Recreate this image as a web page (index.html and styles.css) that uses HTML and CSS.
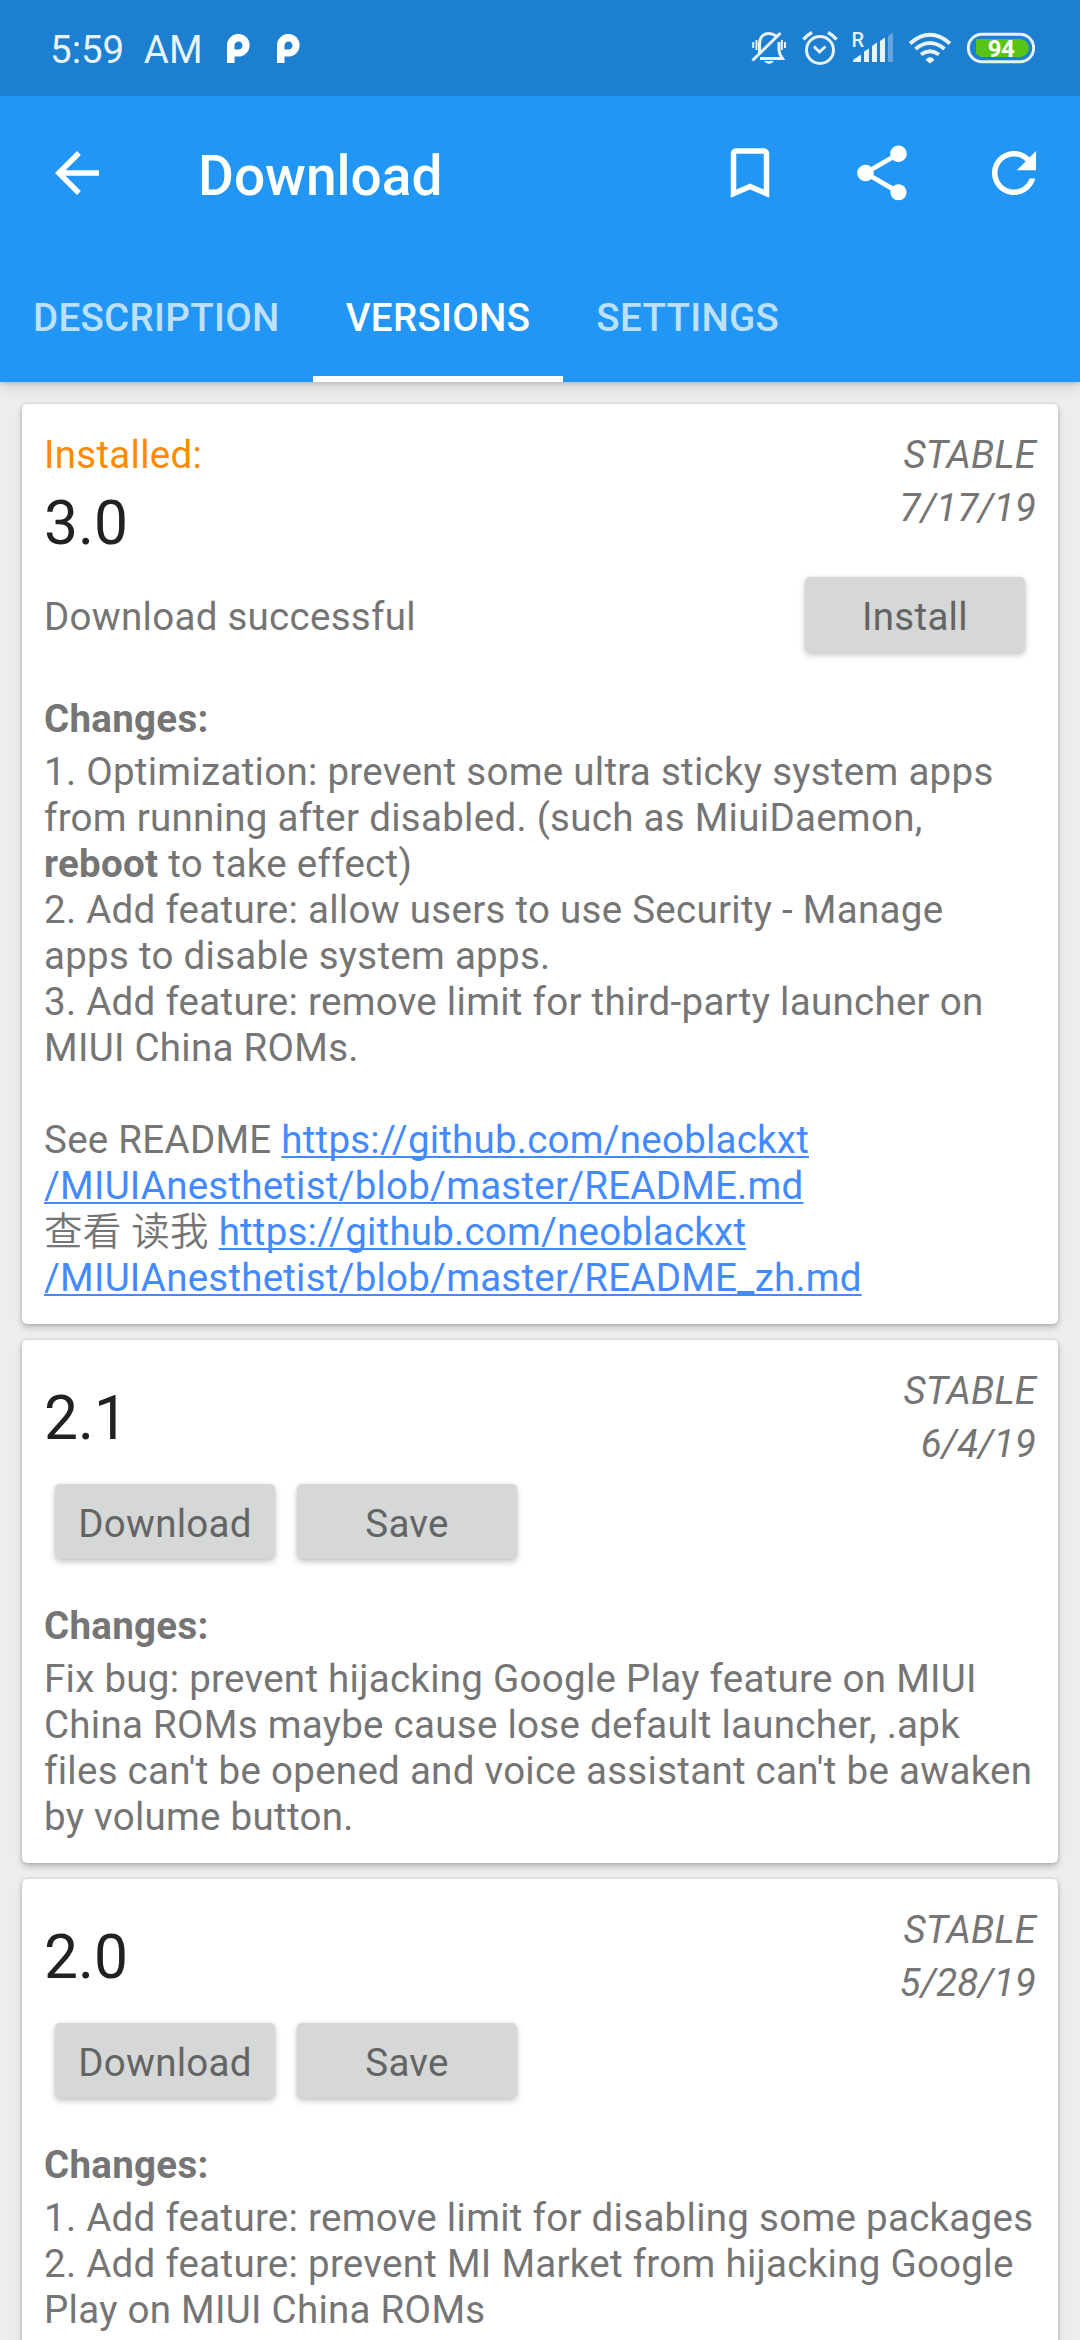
FILE: index.html
```html
<!DOCTYPE html>
<html lang="en">
<head>
<meta charset="utf-8">
<title>Download</title>
<link rel="stylesheet" href="styles.css">
</head>
<body>
<header class="header">
  <div class="status">
    <span class="time">5:59 AM</span>
    <svg class="notice" width="24" height="30" viewBox="0 0 24 30"><path fill="#fff" fill-rule="evenodd" d="M1 29V11.500A11.300 11.300 0 1 1 12.300 22.500H8.500V29ZM8.500 15.500H12.300A4 4 0 1 0 8.500 11.500Z"/></svg>
    <svg class="notice second" width="24" height="30" viewBox="0 0 24 30"><path fill="#fff" fill-rule="evenodd" d="M1 29V11.500A11.300 11.300 0 1 1 12.300 22.500H8.500V29ZM8.500 15.500H12.300A4 4 0 1 0 8.500 11.500Z"/></svg>
    <svg class="system" width="290" height="40" viewBox="745 28 290 40" fill="none" stroke="#e8f2fb" stroke-width="3">
      <path d="M759.500 53V44.500C759.500 37 763.500 33.500 769 33.500C772 33.500 774 34.500 776 36M779 42V50C779 54 781 56 782.500 58.500H760"/>
      <path d="M752.500 60.500L780.500 33"/>
      <path d="M753.200 42V48M756.500 40V50M781.900 40V50M785 42V48" stroke-width="2"/>
      <path d="M764 61H774Q772 64 769 64T764 61Z" fill="#e8f2fb" stroke="none"/>
      <circle cx="820" cy="50" r="13.500"/>
      <path d="M814 46.500L819.500 52L825.500 46.500"/>
      <path d="M803.500 39.500Q807 35 812 32.500M836.500 39.500Q833 35 828 32.500" stroke-width="3.600"/>
      <text class="roaming" x="851.500" y="46.500">R</text>
      <path d="M853 62V60L861 54.500V62ZM864 62V51.500L869 48.500V62ZM872 62V46L877 42.500V62ZM880 62V41L885 37.500V62Z" fill="#e8f2fb" stroke="none"/>
      <path d="M888 62V36L893 32.500V62Z" fill="#e8f2fb" opacity=".35" stroke="none"/>
      <path d="M910 43.500Q930 26 950 43.500M915.500 49Q930 37 944.500 49M921 54.500Q930 48 939 54.500" stroke-width="3.800"/>
      <path d="M925.500 60Q930 54 934.500 60L930 63.500Z" fill="#e8f2fb" stroke="none"/>
      <rect x="968.300" y="34.300" width="65.400" height="27.400" rx="13.700"/>
      <path d="M976 39H1020A9 9 0 0 1 1020 57H981L976 54Z" fill="#58c516" stroke="none"/>
      <text class="percent" x="1001" y="56.500" text-anchor="middle">94</text>
    </svg>
  </div>
  <div class="toolbar">
    <svg class="back" width="66" height="66" viewBox="0 0 24 24"><path d="M20 11H7.830l5.590-5.590L12 4l-8 8 8 8 1.410-1.410L7.830 13H20v-2z"/></svg>
    <h1 class="title">Download</h1>
    <svg width="66" height="66" viewBox="0 0 24 24"><path d="M17 3H7c-1.100 0-1.990.9-1.990 2L5 21l7-3 7 3V5c0-1.100-.9-2-2-2zm0 15l-5-2.180L7 18V5h10v13z"/></svg>
    <svg width="66" height="66" viewBox="0 0 24 24"><path d="M18 16.080c-.76 0-1.440.3-1.960.77L8.910 12.700c.05-.23.090-.46.090-.7s-.040-.47-.090-.7l7.050-4.110c.54.5 1.250.81 2.040.81 1.660 0 3-1.340 3-3s-1.340-3-3-3-3 1.340-3 3c0 .24.040.47.090.7L8.040 9.810C7.500 9.310 6.790 9 6 9c-1.660 0-3 1.340-3 3s1.340 3 3 3c.79 0 1.500-.31 2.040-.81l7.120 4.160c-.05.21-.08.43-.08.65 0 1.610 1.310 2.920 2.920 2.920s2.920-1.310 2.920-2.920-1.310-2.920-2.920-2.920z"/></svg>
    <svg width="66" height="66" viewBox="0 0 24 24"><path d="M17.650 6.350C16.200 4.900 14.210 4 12 4c-4.420 0-7.990 3.580-7.990 8s3.570 8 7.990 8c3.730 0 6.840-2.550 7.730-6h-2.080c-.82 2.330-3.040 4-5.650 4-3.310 0-6-2.690-6-6s2.690-6 6-6c1.660 0 3.140.69 4.220 1.780L13 11h7V4l-2.350 2.350z"/></svg>
  </div>
  <nav class="tabs">
    <a class="tab">DESCRIPTION</a>
    <a class="tab active">VERSIONS</a>
    <a class="tab">SETTINGS</a>
  </nav>
</header>
<main class="versions">
  <article class="card">
    <div class="summary">
      <div>
        <p class="installed">Installed:</p>
        <h2 class="number current">3.0</h2>
      </div>
      <div class="release"><p>STABLE</p><p>7/17/19</p></div>
    </div>
    <div class="actions done"><span class="message">Download successful</span><button class="button">Install</button></div>
    <h3 class="heading">Changes:</h3>
    <p class="changes">1. Optimization: prevent some ultra sticky system apps<br>from running after disabled. (such as MiuiDaemon,<br><b>reboot</b> to take effect)<br>2. Add feature: allow users to use Security - Manage<br>apps to disable system apps.<br>3. Add feature: remove limit for third-party launcher on<br>MIUI China ROMs.<br><br>See README <a>https://github.com/neoblackxt<br>/MIUIAnesthetist/blob/master/README.md</a><br><span class="han">查看 读我</span> <a>https://github.com/neoblackxt<br>/MIUIAnesthetist/blob/master/README_zh.md</a></p>
  </article>
  <article class="card">
    <div class="summary">
      <h2 class="number">2.1</h2>
      <div class="release"><p>STABLE</p><p>6/4/19</p></div>
    </div>
    <div class="actions"><button class="button">Download</button><button class="button">Save</button></div>
    <h3 class="heading">Changes:</h3>
    <p class="changes">Fix bug: prevent hijacking Google Play feature on MIUI<br>China ROMs maybe cause lose default launcher, .apk<br>files can't be opened and voice assistant can't be awaken<br>by volume button.</p>
  </article>
  <article class="card">
    <div class="summary">
      <h2 class="number">2.0</h2>
      <div class="release"><p>STABLE</p><p>5/28/19</p></div>
    </div>
    <div class="actions"><button class="button">Download</button><button class="button">Save</button></div>
    <h3 class="heading">Changes:</h3>
    <p class="changes">1. Add feature: remove limit for disabling some packages<br>2. Add feature: prevent MI Market from hijacking Google<br>Play on MIUI China ROMs</p>
  </article>
</main>
</body>
</html>
```
FILE: styles.css
```css
* { box-sizing: border-box; }

body {
  margin: 0;
  height: 2340px;
  overflow: hidden;
  background: #ededed;
  color: #757575;
  font: 38.5px/46px Roboto, "Noto Sans CJK SC", sans-serif;
  letter-spacing: .28px;
}

h1, h2, h3, p { margin: 0; }

.header {
  position: relative;
  height: 382px;
  background: #2296f4;
  color: #fff;
  box-shadow: 0 1px 4px rgba(0, 0, 0, .18), 0 6px 12px rgba(0, 0, 0, .1);
}

.status {
  display: flex;
  align-items: flex-start;
  height: 96px;
  padding-left: 50px;
  background: #1d7fd0;
  letter-spacing: 0;
}

.time {
  width: 176px;
  padding-top: 27px;
  color: #e8f2fb;
  word-spacing: 10px;
  white-space: nowrap;
}

.notice { margin-top: 34px; }
.second { margin-left: 26px; }
.system { margin: 28px 45px 0 auto; }

.roaming { font: 500 20px Roboto, sans-serif; fill: #e8f2fb; stroke: none; }
.percent { font: 700 24px Roboto, sans-serif; fill: #fff; stroke: none; letter-spacing: -.5px; }

.toolbar {
  display: flex;
  align-items: center;
  height: 154px;
  padding: 0 33px 0 44px;
  gap: 66px;
  fill: #fff;
}

.title {
  flex: 1;
  margin-left: 22px;
  padding-top: 5px;
  font-size: 55px;
  font-weight: 500;
  letter-spacing: 0;
  line-height: 66px;
}

.tabs { display: flex; height: 132px; }

.tab {
  padding: 45px 33px 0;
  color: #bde0fc;
  font-weight: 500;
  letter-spacing: .31px;
}

.active { color: #fff; border-bottom: 6px solid #fff; }

.versions {
  display: flex;
  flex-direction: column;
  gap: 16px;
  padding: 22px;
}

.card {
  flex: none;
  padding: 28px 22px 23px;
  border-radius: 5px;
  background: #fff;
  box-shadow: 0 3px 6px rgba(0, 0, 0, .24), 0 0 3px rgba(0, 0, 0, .14);
}

.summary { display: flex; justify-content: space-between; }

.number {
  height: 71px;
  margin: 15px 0 30px;
  color: #212121;
  font-size: 60.5px;
  font-weight: 400;
  letter-spacing: 0;
  line-height: 71px;
}

.current { margin: 10px 0 18px; }
.installed { color: #ff8a00; }

.release {
  display: flex;
  flex-direction: column;
  gap: 7px;
  font-style: italic;
  letter-spacing: .1px;
  text-align: right;
}

.actions { display: flex; height: 75px; gap: 22px; padding-left: 11px; }

.done { justify-content: space-between; padding: 0 11px 0 0; }
.message { padding-top: 17px; }

.button {
  width: 220px;
  height: 75px;
  padding: 4px 0 0;
  border: 0;
  border-radius: 5px;
  background: #d6d7d7;
  color: #636464;
  font: inherit;
  letter-spacing: inherit;
  box-shadow: 0 3px 6px rgba(0, 0, 0, .22), 0 0 3px rgba(0, 0, 0, .08);
}

.heading {
  margin: 44px 0 7px;
  font-size: 38.5px;
  font-weight: 700;
  line-height: 46px;
}

.changes { white-space: nowrap; }

.changes a {
  color: #448aff;
  letter-spacing: .22px;
  text-decoration: underline;
  text-decoration-skip-ink: none;
  text-decoration-thickness: 2px;
  text-underline-offset: 3px;
}

.han { font-weight: 350; line-height: 1; }
```
